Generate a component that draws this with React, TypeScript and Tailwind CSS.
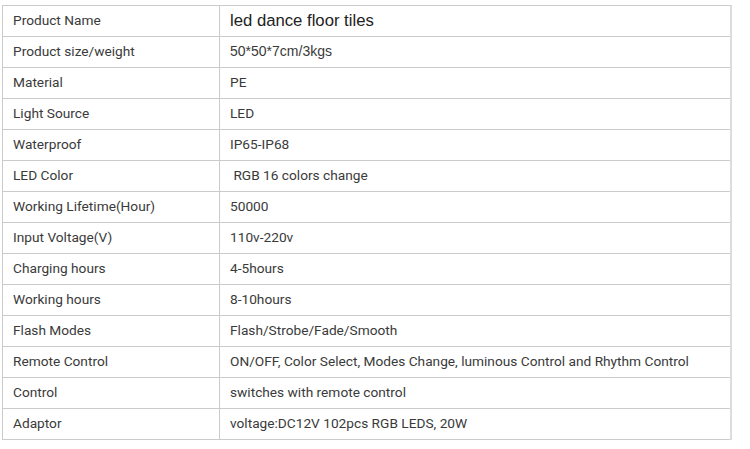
import React from "react";

const rows: [string, string, string?][] = [
  ["Product Name", "led dance floor tiles", "title"],
  ["Product size/weight", "50*50*7cm/3kgs", "arial"],
  ["Material", "PE"],
  ["Light Source", "LED"],
  ["Waterproof", "IP65-IP68"],
  ["LED Color", " RGB 16 colors change"],
  ["Working Lifetime(Hour)", "50000"],
  ["Input Voltage(V)", "110v-220v"],
  ["Charging hours", "4-5hours"],
  ["Working hours", "8-10hours"],
  ["Flash Modes", "Flash/Strobe/Fade/Smooth"],
  ["Remote Control", "ON/OFF, Color Select, Modes Change, luminous Control and Rhythm Control"],
  ["Control", "switches with remote control"],
  ["Adaptor", "voltage:DC12V 102pcs RGB LEDS, 20W"],
];

export default function App() {
  return (
    <div className="w-[750px] h-[449px] bg-white pt-[5px] pl-[2px]">
      <div className="w-[730px] border-t border-l border-[#cbcbcb] border-r-2 border-r-[#dcdcdc] text-[#3a3a3a] font-['Roboto',sans-serif] text-[13.7px]">
        {rows.map(([k, v, kind], i) => (
          <div key={i} className="flex h-[31px] border-b border-[#cbcbcb]">
            <div className="w-[217px] shrink-0 border-r border-[#cbcbcb] pl-[10px] pb-[1px] flex items-center">
              {k}
            </div>
            <div
              className={
                "flex-1 pl-[10px] pb-[1px] flex items-center whitespace-pre " +
                (kind === "title"
                  ? "font-['Liberation_Sans',Arial,sans-serif] text-[16.7px] text-[#222]"
                  : kind === "arial"
                  ? "font-['Liberation_Sans',Arial,sans-serif] text-[14px]"
                  : "")
              }
            >
              {v}
            </div>
          </div>
        ))}
      </div>
    </div>
  );
}
